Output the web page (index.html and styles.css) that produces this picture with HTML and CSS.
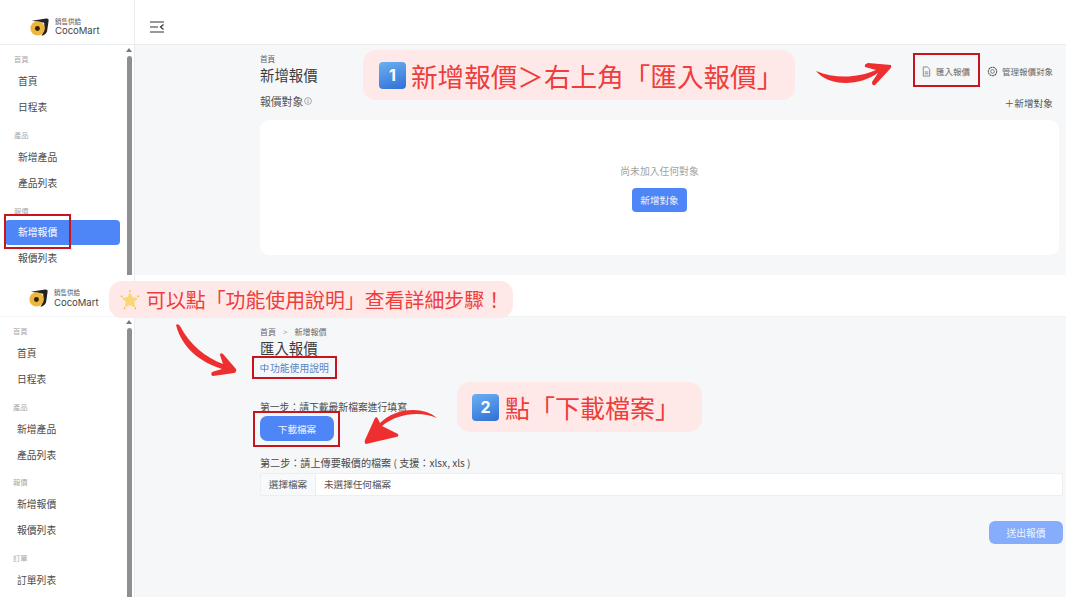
FILE: index.html
```html
<!DOCTYPE html>
<html lang="zh-Hant">
<head>
<meta charset="utf-8">
<title>CocoMart 匯入報價</title>
<link rel="stylesheet" href="styles.css">
</head>
<body>
<div class="page">

  <section class="shot shot-one">
    <aside class="sidebar">
      <div class="brand">
        <svg class="logo" viewBox="0 0 20 19"><path d="M2 3 L17 .5 Q20 .3 19.6 3 L18 14 Q16.5 18 12 18.8 Q15.5 14 15 5 Z" fill="#222"/><circle cx="8" cy="11" r="7.6" fill="#eeb63c"/><circle cx="7.8" cy="11" r="2.6" fill="#2a2410"/></svg>
        <div class="brand-text"><span class="brand-sub">銷售供給</span><span class="brand-name">CocoMart</span></div>
      </div>
      <div class="side-body">
        <nav class="menu">
          <h4 class="menu-label">首頁</h4>
          <a class="menu-item">首頁</a>
          <a class="menu-item">日程表</a>
          <h4 class="menu-label">產品</h4>
          <a class="menu-item">新增產品</a>
          <a class="menu-item">產品列表</a>
          <h4 class="menu-label">報價</h4>
          <a class="menu-item active">新增報價</a>
          <a class="menu-item">報價列表</a>
        </nav>
        <div class="scrollbar"><i class="scroll-arrow"></i><i class="scroll-thumb"></i></div>
      </div>
    </aside>
    <div class="workspace">
      <header class="topbar">
        <svg class="toggle" viewBox="0 0 14 12"><path d="M0 1h14M0 6h8M0 11h14M13.5 3.5 10.5 6l3 2.5" fill="none" stroke="#333" stroke-width="1.2"/></svg>
      </header>
      <main class="content content-one">
        <p class="crumb">首頁</p>
        <div class="title-row">
          <h1 class="title">新增報價</h1>
          <div class="actions">
            <span class="action">
              <svg class="action-icon" viewBox="0 0 12 12"><path d="M2.5 1h4.5l2.5 2.6V11h-7zM4 6.5h4M4 8.5h4" fill="none" stroke="#666" stroke-width=".8"/></svg>匯入報價</span>
            <span class="action">
              <svg class="action-icon" viewBox="0 0 12 12"><circle cx="6" cy="6" r="4.6" fill="none" stroke="#555" stroke-width="1.1" stroke-dasharray="2.2 .5"/><circle cx="6" cy="6" r="2" fill="none" stroke="#555" stroke-width=".8"/></svg>管理報價對象</span>
          </div>
        </div>
        <div class="target-row">
          <span class="target-label">報價對象<svg class="info" viewBox="0 0 8 8"><circle cx="4" cy="4" r="3.4" fill="none" stroke="#777" stroke-width=".6"/><path d="M4 3.4v2.6M4 2v.8" stroke="#777" stroke-width=".7"/></svg></span>
          <span class="add-target">＋新增對象</span>
        </div>
        <div class="card">
          <p class="empty">尚未加入任何對象</p>
          <button class="btn btn-small">新增對象</button>
        </div>
      </main>
    </div>
  </section>

  <section class="shot shot-two">
    <aside class="sidebar">
      <div class="brand brand-two">
        <svg class="logo" viewBox="0 0 20 19"><path d="M2 3 L17 .5 Q20 .3 19.6 3 L18 14 Q16.5 18 12 18.8 Q15.5 14 15 5 Z" fill="#222"/><circle cx="8" cy="11" r="7.6" fill="#eeb63c"/><circle cx="7.8" cy="11" r="2.6" fill="#2a2410"/></svg>
        <div class="brand-text"><span class="brand-sub">銷售供給</span><span class="brand-name">CocoMart</span></div>
      </div>
      <div class="side-body">
        <nav class="menu menu-two">
          <h4 class="menu-label">首頁</h4>
          <a class="menu-item">首頁</a>
          <a class="menu-item">日程表</a>
          <h4 class="menu-label">產品</h4>
          <a class="menu-item">新增產品</a>
          <a class="menu-item">產品列表</a>
          <h4 class="menu-label">報價</h4>
          <a class="menu-item">新增報價</a>
          <a class="menu-item">報價列表</a>
          <h4 class="menu-label">訂單</h4>
          <a class="menu-item">訂單列表</a>
        </nav>
        <div class="scrollbar"><i class="scroll-arrow"></i><i class="scroll-thumb"></i></div>
      </div>
    </aside>
    <div class="workspace">
      <header class="topbar topbar-two"></header>
      <main class="content content-two">
        <p class="crumb crumb-two">首頁<span class="crumb-sep">&gt;</span>新增報價</p>
        <h1 class="title">匯入報價</h1>
        <a class="help-link">
          <svg class="help-icon" viewBox="0 0 10 10"><path d="M1 2.5h8v4H1zM5 .5v9.2" fill="none" stroke="#5b84c4" stroke-width=".9"/></svg>功能使用說明</a>
        <p class="step step-first">第一步：請下載最新檔案進行填寫</p>
        <button class="btn btn-download">下載檔案</button>
        <p class="step step-second">第二步：請上傳要報價的檔案 ( 支援：xlsx, xls )</p>
        <div class="file-input"><span class="file-btn">選擇檔案</span><span class="file-name">未選擇任何檔案</span></div>
        <div class="submit-row"><button class="btn btn-submit">送出報價</button></div>
      </main>
    </div>
  </section>

  <div class="callout callout-one"><span class="keycap">1</span>新增報價＞右上角「匯入報價」</div>
  <div class="callout callout-two">
    <svg class="star" viewBox="0 0 24 24"><path d="M12 4l2.6 5.2 5.8.8-4.2 4 1 5.7-5.2-2.7-5.2 2.7 1-5.7-4.2-4 5.8-.8z" fill="#f9d774" stroke="#f9d774" stroke-width="1.5" stroke-linejoin="round"/><path d="M12 0v2M1 7l2 1M23 7l-2 1M5 23l1-2M19 23l-1-2" stroke="#f3b63a" stroke-width="1.6"/></svg>可以點「功能使用說明」查看詳細步驟！</div>
  <div class="callout callout-three"><span class="keycap keycap-two">2</span>點「下載檔案」</div>

  <div class="mark mark-menu"></div>
  <div class="mark mark-import"></div>
  <div class="mark mark-help"></div>
  <div class="mark mark-download"></div>

  <svg class="arrows" viewBox="0 0 1066 597">
    <path d="M816 71 C835 79 858 78 876 70 L865 67 Q864 64 868 63 L891 65 Q892 67 890 69 L875 85 Q872 86 872 82 L878 73 C858 87 828 86 816 71Z" fill="#ee2f2f"/>
    <path d="M176 325 Q178 323 180 326 C190 345 205 357 223 364 L220 355 Q220 352 223 354 L236 369 Q237 372 234 373 L213 376 Q210 375 212 372 L222 369 C200 362 182 348 176 325Z" fill="#ee2f2f"/>
    <path d="M437 418 C420 411 398 413 382 426 L398 434 Q399 437 396 437 L366 444 Q364 443 365 440 L375 418 Q377 416 378 419 L380 423 C396 407 424 406 437 418Z" fill="#ee2f2f"/>
  </svg>
</div>
</body>
</html>
```
FILE: styles.css
```css
* { box-sizing: border-box; }
html, body { margin: 0; padding: 0; }
body {
  width: 1066px;
  height: 597px;
  overflow: hidden;
  background: #fff;
  font-family: "Noto Sans CJK TC", "Noto Sans", sans-serif;
  color: #444;
}
p, h1, h4 { margin: 0; font-weight: 400; }
button { font-family: inherit; border: 0; }

.page { position: relative; width: 1066px; height: 597px; }

.shot { display: flex; overflow: hidden; }
.shot-one { height: 275px; }
.shot-two { height: 322px; }

/* sidebar */
.sidebar {
  width: 135px;
  flex: none;
  display: flex;
  flex-direction: column;
  background: #fff;
  border-right: 1px solid #e9ebee;
}
.brand {
  height: 45px;
  flex: none;
  display: flex;
  align-items: center;
  gap: 6px;
  padding-left: 30px;
  padding-top: 9px;
  border-bottom: 1px solid #e9ebee;
}
.brand-two { height: 42px; padding: 5px 0 0 29px; border-bottom-color: #f4f5f6; }
.logo { width: 19px; height: 18px; flex: none; }
.brand-text { display: flex; flex-direction: column; line-height: 1; }
.brand-sub { font-size: 6.5px; color: #555; margin-bottom: 2px; }
.brand-name { font-family: "Inter", sans-serif; font-size: 9.5px; color: #444; }

.side-body { flex: 1; display: flex; min-height: 0; }
.menu { flex: 1; padding: 10px 12px 0 5px; display: flex; flex-direction: column; min-width: 0; }
.menu-two { padding: 10px 12px 0 4px; }
.menu-label {
  height: 9px;
  line-height: 9px;
  margin-left: 9px;
  margin-top: 11px;
  font-size: 7.3px;
  color: #a9a9a9;
}
.menu-two .menu-label { margin-top: 10.5px; }
.menu-label:first-child, .menu-two .menu-label:first-child { margin-top: 0; }
.menu-item {
  display: block;
  flex: none;
  height: 26px;
  line-height: 26px;
  padding-left: 13px;
  font-size: 9.8px;
  color: #4a4a4a;
}
.menu-label + .menu-item { margin-top: 4px; }
.active {
  height: 25px;
  line-height: 25px;
  width: 115px;
  background: #4f86f7;
  border-radius: 4px;
  color: #fff;
}
.scrollbar {
  width: 6px;
  margin-right: 2px;
  flex: none;
  display: flex;
  flex-direction: column;
  align-items: center;
  padding-top: 3px;
}
.scroll-arrow {
  width: 0;
  height: 0;
  border: 3px solid transparent;
  border-top: 0;
  border-bottom: 4px solid #777;
  flex: none;
}
.scroll-thumb { flex: 1; width: 5px; margin-top: 4px; background: #8f8f8f; border-radius: 3px 3px 0 0; }

/* workspace */
.workspace { flex: 1; display: flex; flex-direction: column; min-width: 0; }
.topbar {
  height: 45px;
  flex: none;
  display: flex;
  align-items: center;
  padding: 10px 0 0 15px;
  background: #fff;
  border-bottom: 1px solid #e9ebee;
}
.topbar-two { height: 42px; border-bottom-color: #eef0f2; }
.toggle { width: 14px; height: 12px; }

.content { flex: 1; min-height: 0; background: #f6f7f9; display: flex; flex-direction: column; padding-left: 125px; }
.content-one { padding-top: 9px; padding-right: 7px; }
.content-two { padding-top: 9px; padding-right: 3px; }

.crumb { font-size: 7.6px; line-height: 10px; color: #666; }
.crumb-two { font-size: 8px; line-height: 12px; }
.crumb-sep { margin: 0 7px; color: #999; }
.title { font-size: 14.4px; line-height: 20px; color: #3d3d3d; }

.title-row { display: flex; justify-content: space-between; align-items: flex-start; height: 30px; padding-top: 1px; }
.actions { display: flex; gap: 17px; margin-top: -1px; margin-right: 6px; }
.action { display: flex; align-items: center; gap: 4px; font-size: 8.5px; line-height: 14px; color: #666; }
.action-icon { width: 11px; height: 11px; }

.target-row { display: flex; justify-content: space-between; align-items: center; height: 18px; margin-top: -2px; }
.target-label { font-size: 10.8px; color: #555; display: flex; align-items: center; gap: 1px; }
.info { width: 8px; height: 8px; }
.add-target { font-size: 9.6px; color: #555; letter-spacing: .1px; margin-top: 3px; margin-right: 6px; }

.card {
  height: 135px;
  margin-top: 10px;
  background: #fff;
  border-radius: 9px;
  display: flex;
  flex-direction: column;
  align-items: center;
  padding-top: 44px;
}
.empty { font-size: 9.8px; line-height: 14px; color: #a3a3a3; margin-bottom: 10px; }

.btn { background: #4f86f7; color: #eef4ff; display: block; flex: none; padding: 0; text-align: center; }
.btn-small { width: 55px; height: 24px; border-radius: 4px; font-size: 9.6px; }
.btn-download { width: 74px; height: 25px; border-radius: 7px; font-size: 9.6px; margin-top: 2px; }
.btn-submit { width: 74px; height: 23px; border-radius: 6px; font-size: 9.8px; background: #86adfb; }

.help-link { display: flex; align-items: center; font-size: 9.8px; line-height: 14px; color: #5b84c4; margin-top: 3px; }
.help-icon { width: 9px; height: 10px; margin-right: 1px; }

.step { font-size: 9.8px; line-height: 14px; color: #4a4a4a; }
.step-first { margin-top: 25px; }
.step-second { margin-top: 15px; font-size: 10.1px; }

.file-input {
  display: flex;
  flex: none;
  height: 23px;
  margin-top: 3px;
  background: #fff;
  border: 1px solid #eceef0;
  border-radius: 2px;
  font-size: 9.6px;
  line-height: 21px;
  color: #555;
}
.file-btn { width: 55px; text-align: center; background: #f8f9fa; border-right: 1px solid #eceef0; }
.file-name { padding-left: 8px; }
.submit-row { display: flex; justify-content: flex-end; margin-top: 25px; }

/* annotations laid over the screenshots */
.callout {
  position: absolute;
  display: flex;
  align-items: center;
  background: #ffe9e8;
  color: #ee3d3d;
  border-radius: 13px;
  white-space: nowrap;
}
.callout-one { left: 363px; top: 50px; width: 432px; height: 50px; padding-left: 16px; font-size: 26.6px; }
.callout-two { left: 109px; top: 281px; width: 404px; height: 37px; padding-left: 11px; font-size: 19.9px; }
.callout-three { left: 457px; top: 382px; width: 245px; height: 50px; padding-left: 15px; font-size: 25px; }
.keycap {
  width: 27px;
  height: 27px;
  flex: none;
  margin-right: 5px;
  border-radius: 4px;
  background: linear-gradient(160deg, #6cb0f2, #2f6fd6);
  color: #fff;
  font-family: "Inter", sans-serif;
  font-weight: 700;
  font-size: 16px;
  line-height: 27px;
  text-align: center;
}
.keycap-two { margin-right: 6px; }
.star { width: 20px; height: 20px; flex: none; margin-right: 6px; }

.mark { position: absolute; border: 2.5px solid #c8141c; }
.mark-menu { left: 4px; top: 214px; width: 67px; height: 35px; }
.mark-import { left: 913px; top: 53px; width: 67px; height: 34px; }
.mark-help { left: 252px; top: 356px; width: 85px; height: 23px; }
.mark-download { left: 253px; top: 411px; width: 87px; height: 36px; }

.arrows { position: absolute; left: 0; top: 0; width: 1066px; height: 597px; pointer-events: none; }
```
